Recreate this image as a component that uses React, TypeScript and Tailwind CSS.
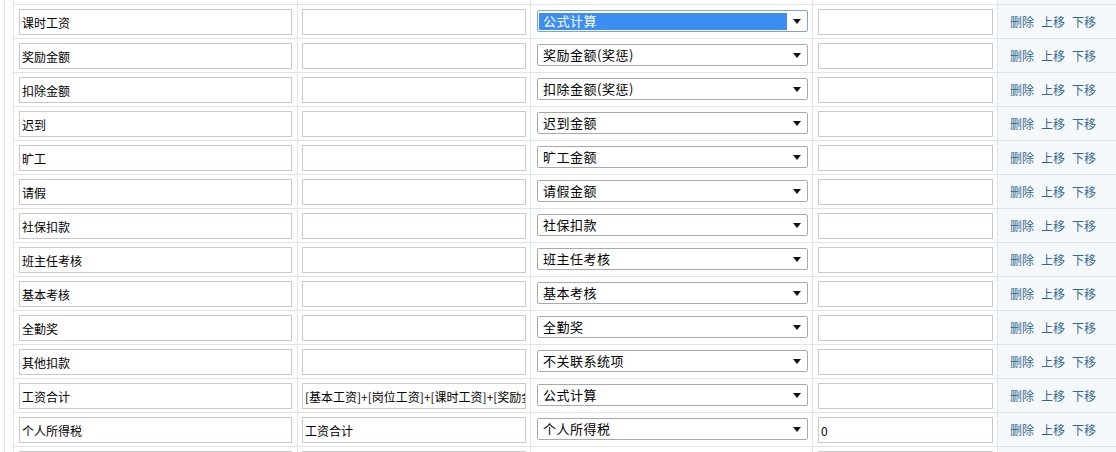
import React from "react";

type Row = {
  name: string;
  formula: string;
  source: string;
  value: string;
  focused?: boolean;
  partial?: boolean;
};

const rows: Row[] = [
  { name: "课时工资", formula: "", source: "公式计算", value: "", focused: true },
  { name: "奖励金额", formula: "", source: "奖励金额(奖惩)", value: "" },
  { name: "扣除金额", formula: "", source: "扣除金额(奖惩)", value: "" },
  { name: "迟到", formula: "", source: "迟到金额", value: "" },
  { name: "旷工", formula: "", source: "旷工金额", value: "" },
  { name: "请假", formula: "", source: "请假金额", value: "" },
  { name: "社保扣款", formula: "", source: "社保扣款", value: "" },
  { name: "班主任考核", formula: "", source: "班主任考核", value: "" },
  { name: "基本考核", formula: "", source: "基本考核", value: "" },
  { name: "全勤奖", formula: "", source: "全勤奖", value: "" },
  { name: "其他扣款", formula: "", source: "不关联系统项", value: "" },
  {
    name: "工资合计",
    formula: "[基本工资]+[岗位工资]+[课时工资]+[奖励金额]-[扣除金额]",
    source: "公式计算",
    value: "",
  },
  { name: "个人所得税", formula: "工资合计", source: "个人所得税", value: "0" },
  // next row, scrolled below the fold
  { name: "", formula: "", source: "", value: "", partial: true },
];

const cell = "border-l border-[#dde4ec]";

export default function App() {
  return (
    <div
      className="h-[452px] w-[1116px] overflow-hidden bg-white text-[12px] text-black"
      style={{ fontFamily: '"Noto Sans CJK SC", "Noto Sans", sans-serif' }}
    >
      <div className="ml-[4px] flex min-h-full">
        <div className="w-[9px] shrink-0 border-l border-[#dde4ec]" />
        <div className="flex-1">
          <div className="grid h-[5px] grid-cols-[284px_233px_282px_185px_1fr] border-b border-[#dde4ec]">
            <div className={cell} />
            <div className={cell} />
            <div className={cell} />
            <div className={cell} />
            <div className={`${cell} bg-[#f6f9fc]`} />
          </div>
          {rows.map((row, i) => (
            <SalaryRow key={i} row={row} />
          ))}
        </div>
      </div>
    </div>
  );
}

function SalaryRow({ row }: { row: Row }) {
  return (
    <div className="grid h-[34px] grid-cols-[284px_233px_282px_185px_1fr] border-b border-[#dde4ec]">
      <div className={`${cell} pl-[5px] pt-[4px]`}>
        <TextBox value={row.name} width="w-[273px]" />
      </div>
      <div className={`${cell} pl-[4px] pt-[4px]`}>
        <TextBox value={row.formula} width="w-[224px]" />
      </div>
      <div className={`${cell} flex items-center pl-[6px] pb-[1px]`}>
        {!row.partial && <SelectBox value={row.source} focused={row.focused} />}
      </div>
      <div className={`${cell} pl-[5px] pt-[4px]`}>
        <TextBox value={row.value} width="w-[175px]" />
      </div>
      <div className={`${cell} flex items-center gap-[7px] bg-[#f6f9fc] pl-[12px] text-[#32688f]`}>
        {!row.partial && (
          <>
            <a className="cursor-pointer">删除</a>
            <a className="cursor-pointer">上移</a>
            <a className="cursor-pointer">下移</a>
          </>
        )}
      </div>
    </div>
  );
}

function TextBox({ value, width }: { value: string; width: string }) {
  return (
    <div
      className={`${width} flex h-[26px] items-center overflow-hidden whitespace-nowrap border border-[#c9c9c9] bg-white pl-[2px] pt-[2px]`}
    >
      {value}
    </div>
  );
}

function SelectBox({ value, focused }: { value: string; focused?: boolean }) {
  return (
    <div
      className={`flex h-[22px] w-[271px] items-center rounded-[2px] border bg-white pl-[1px] pr-[6px] ${
        focused ? "border-[#7fa4c6]" : "border-[#a9a9a9]"
      }`}
    >
      <div
        className={`flex h-[17px] flex-1 items-center pl-[4px] text-[13px] tracking-[0.5px] ${
          focused ? "bg-[#3c8ef3] text-white" : ""
        }`}
      >
        {value}
      </div>
      <svg width="8" height="5" viewBox="0 0 8 5" className="ml-[6px] shrink-0">
        <path d="M0 0h8L4 5z" fill="#111" />
      </svg>
    </div>
  );
}
